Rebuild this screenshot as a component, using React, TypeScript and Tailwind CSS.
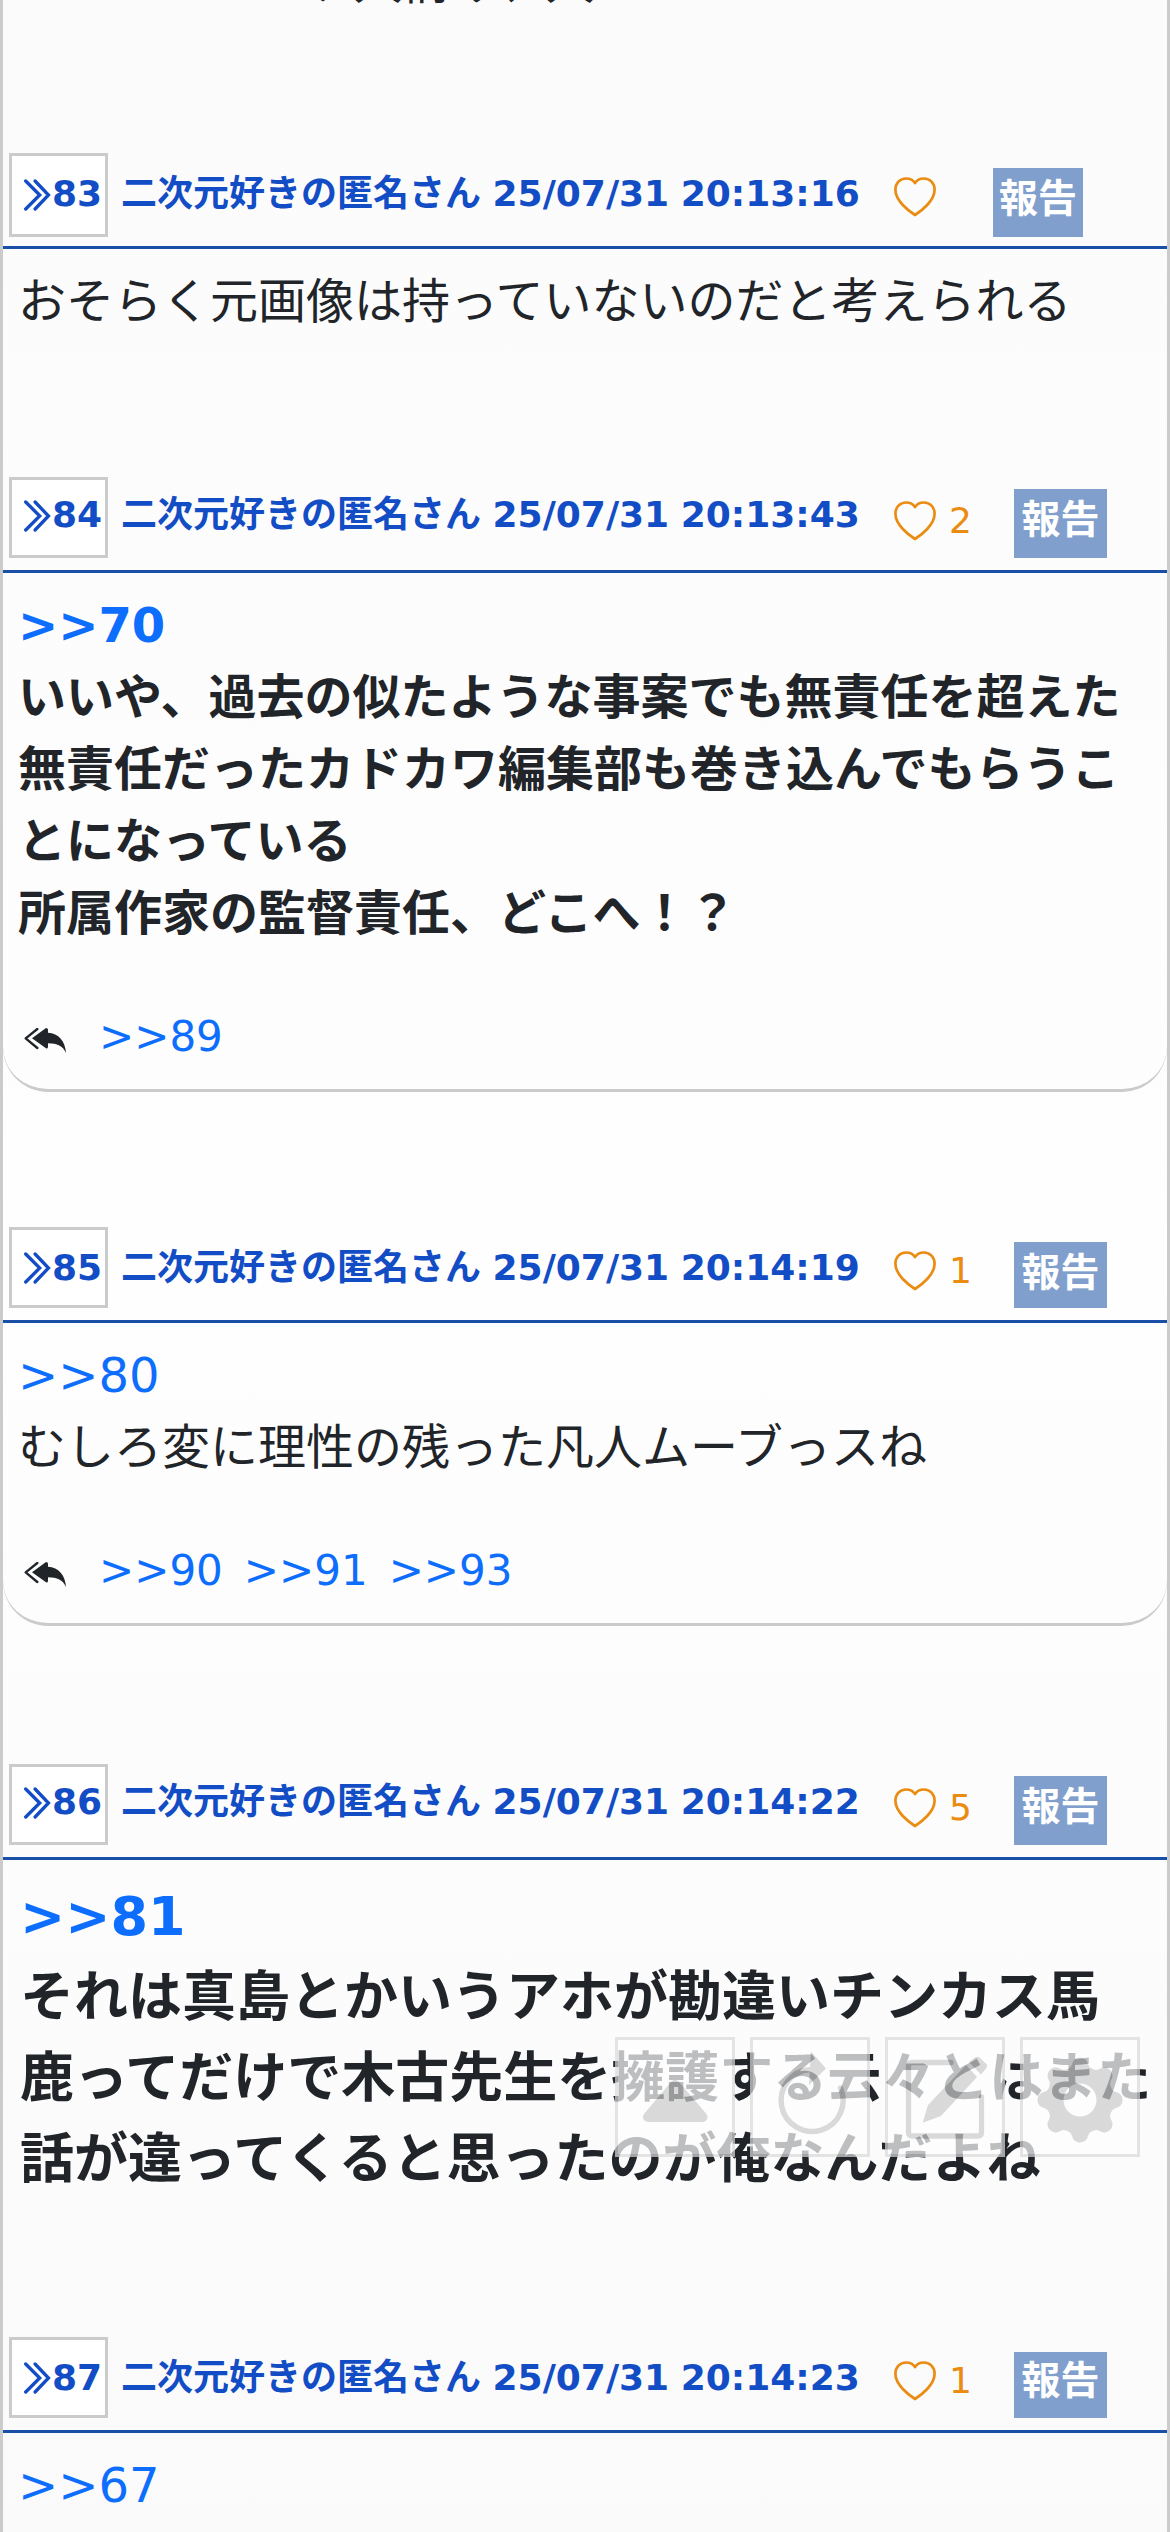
import React from 'react';
import clsx from 'clsx';

const posts = [
  { id: 83, time: "25/07/31 20:13:16", likes: 0, size: "normal", anchor: "", lines: ["おそらく元画像は持っていないのだと考えられる"], replies: [], title: "leading-[82px]", arrow: "mt-[23px]", report: "mt-[15px] w-[90px] h-[69px] leading-[61px]", space: "mb-[141px]" },
  { id: 84, time: "25/07/31 20:13:43", likes: 2, size: "bold", anchor: ">>70", lines: ["いいや、過去の似たような事案でも無責任を超えた", "無責任だったカドカワ編集部も巻き込んでもらうこ", "とになっている", "所属作家の監督責任、どこへ！？"], replies: [">>89"], title: "leading-[76px]", arrow: "mt-[20px]", report: "mt-[12px] w-[93px] h-[69px] leading-[61px]", space: "mb-[135px]" },
  { id: 85, time: "25/07/31 20:14:19", likes: 1, size: "normal", anchor: ">>80", lines: ["むしろ変に理性の残った凡人ムーブっスね"], replies: [">>90", ">>91", ">>93"], title: "leading-[81px]", arrow: "mt-[22px]", report: "mt-[15px] w-[93px] h-[66px] leading-[61px]", space: "mb-[138px]" },
  { id: 86, time: "25/07/31 20:14:22", likes: 5, size: "large", anchor: ">>81", lines: ["それは真島とかいうアホが勘違いチンカス馬", "鹿ってだけで木古先生を擁護する云々とはまた", "話が違ってくると思ったのが俺なんだよね"], replies: [], title: "leading-[76px]", arrow: "mt-[20px]", report: "mt-[12px] w-[93px] h-[69px] leading-[61px]", space: "mb-[138px]" },
  { id: 87, time: "25/07/31 20:14:23", likes: 1, size: "normal", anchor: ">>67", lines: [], replies: [], title: "leading-[81px]", arrow: "mt-[22px]", report: "mt-[15px] w-[93px] h-[66px] leading-[57px]", space: "" },
];

const Chevrons = () => (
  <svg width="28" height="32" viewBox="0 0 28 32" fill="none" stroke="currentColor" strokeWidth="3.3" strokeLinecap="round" strokeLinejoin="miter">
    <path d="M2.7 2 L16.7 16 L2.7 30" />
    <path d="M12.1 2 L25.5 16 L12.1 30" />
  </svg>
);

const Heart = () => (
  <svg width="42" height="40" viewBox="0 0 42 40" fill="none" stroke="currentColor" strokeWidth="2.7" strokeLinejoin="round">
    <path d="M21 38 C14 33.5 1.4 23.5 1.4 12.8 C1.4 6.2 6 1.5 12 1.5 C16 1.5 19.4 3.4 21 6.2 C22.6 3.4 26 1.5 30 1.5 C36 1.5 40.6 6.2 40.6 12.8 C40.6 23.5 28 33.5 21 38 Z" />
  </svg>
);

const ReplyAll = () => (
  <svg width="42" height="25" viewBox="0 0 126 75">
    <path d="M40 3 L5 31 L40 60" fill="none" stroke="currentColor" strokeWidth="7" strokeLinecap="round" strokeLinejoin="round" />
    <path d="M24 31 L66 0 Q72 0 72 5 V14 C104 15 124 40 126 75 C116 53 100 47 72 46 V57 Q71 63 66 61 Z" fill="currentColor" />
  </svg>
);

// Eight rounded teeth around the hub
const gearPath = () => {
  const at = (deg, r) => {
    const a = (deg * Math.PI) / 180;
    return `${(60 + r * Math.cos(a)).toFixed(2)} ${(63 + r * Math.sin(a)).toFixed(2)}`;
  };
  let d = `M${at(-12.5, 37)}`;
  for (let i = 0; i < 8; i++) {
    const t = i * 45;
    d += ` A8.2 8.2 0 0 1 ${at(t + 12.5, 37)} Q${at(t + 15.5, 33.5)} ${at(t + 22.5, 33.5)} Q${at(t + 29.5, 33.5)} ${at(t + 32.5, 37)}`;
  }
  return `${d} Z M76.5 63 A16.5 16.5 0 1 0 43.5 63 A16.5 16.5 0 1 0 76.5 63 Z`;
};

const tools = [
  {
    label: "上へ",
    icon: <path d="M60 48 L87.5 80 H33 Z" fill="currentColor" stroke="currentColor" strokeWidth="10" strokeLinejoin="round" />,
  },
  {
    label: "更新",
    icon: (
      <>
        <path d="M90.5 51 A31 31 0 1 1 60 32.5" fill="none" stroke="currentColor" strokeWidth="5.5" strokeLinecap="round" />
        <path d="M61 14.5 L76 31.5 L59 48 Z" fill="currentColor" />
      </>
    ),
  },
  {
    label: "書き込む",
    icon: (
      <>
        <path d="M66 25.5 H27 Q23.5 25.5 23.5 29 V95.5 Q23.5 99 27 99 H93 Q96.5 99 96.5 95.5 V60" fill="none" stroke="currentColor" strokeWidth="5.3" strokeLinecap="round" />
        <path d="M37.7 85.7 L43 68 L81 28 L92 40 L56 79 Z" fill="currentColor" />
        <path d="M84 25 L90 20.5 Q93 19 95 21 L101.5 27 Q103 29 101.5 31 L96 37.5 Z" fill="currentColor" />
      </>
    ),
  },
  {
    label: "設定",
    icon: <path d={gearPath()} fill="currentColor" fillRule="evenodd" />,
  },
];

const Post = ({ post }) => {
  const liked = post.likes > 0;
  return (
    <article className={post.space}>
      <header className="flex items-start h-[96px] pl-[6px] border-b-[3px] border-[#1a4fa8] text-[#124dc6] text-[36px]">
        <a className={clsx("flex items-start w-[99px] pl-[11px] gap-px bg-white border-[3px] border-[#cbcbcb] font-bold", liked ? "h-[81px]" : "h-[84px]")}>
          <span className={post.arrow}><Chevrons /></span>
          <span className={clsx("-mt-[3px]", post.title)}>{post.id}</span>
        </a>
        <h3 className={clsx("w-[777px] pl-[13px] font-bold whitespace-nowrap [word-spacing:-1px]", post.title)}>
          二次元好きの匿名さん {post.time}
        </h3>
        <div className={clsx("flex text-[#ea8c12] pl-[9px] pt-[24px]", liked ? "w-[129px]" : "w-[108px]")}>
          <Heart />
          {liked && <span className="ml-[13px] -mt-px leading-[42px]">{post.likes}</span>}
        </div>
        <button className={clsx("flex items-start justify-center bg-[#809fcd] text-white text-[39px] font-bold", post.report)}>
          報告
        </button>
      </header>

      <div className={clsx(post.replies.length > 0 && "border-b-[3px] border-[#cbcbcb] rounded-b-[45px]")}>
        <div
          className={clsx(
            "pt-[16px] -mb-px whitespace-nowrap",
            post.size === "large" ? "pl-[17px] text-[54px] leading-[81px]" : "pl-[15px] text-[48px] leading-[72px]",
            post.size !== "normal" && "font-bold"
          )}
        >
          {post.anchor && <a className="block text-[#0d6efd]">{post.anchor}</a>}
          {post.lines.map((line) => (
            <p key={line}>{line}</p>
          ))}
        </div>

        {post.replies.length > 0 && (
          <div className="flex items-center h-[63px] mt-[57px] mb-[21px] pl-[21px]">
            <span className="mt-[7px]"><ReplyAll /></span>
            <div className="flex gap-[21px] ml-[33px] text-[42px] leading-[63px] text-[#0d6efd]">
              {post.replies.map((reply) => (
                <a key={reply}>{reply}</a>
              ))}
            </div>
          </div>
        )}
      </div>
    </article>
  );
};

const App = () => {
  return (
    <div className="relative h-[2532px] overflow-hidden bg-linear-to-b from-[#fbfbfb] via-[#fefefe] to-[#fafafa] border-x-[3px] border-[#cbcbcb] font-['DejaVu_Sans','Noto_Sans_CJK_JP',sans-serif] text-[#212529]">
      <p className="-mt-[54px] mb-[135px] pl-[303px] text-[48px] leading-[72px] whitespace-nowrap">ケ人情み、人</p>

      {posts.map((post) => (
        <Post key={post.id} post={post} />
      ))}

      {/* Floating tools over the thread */}
      <nav className="absolute top-[2037px] right-[27px] flex gap-[15px] opacity-70">
        {tools.map((tool) => (
          <button key={tool.label} aria-label={tool.label} className="size-[120px] bg-white border-[3px] border-[#dadada] text-[#cccccc]">
            <svg className="-m-[3px]" width="120" height="120" viewBox="0 0 120 120">
              {tool.icon}
            </svg>
          </button>
        ))}
      </nav>
    </div>
  );
};

export default App;
